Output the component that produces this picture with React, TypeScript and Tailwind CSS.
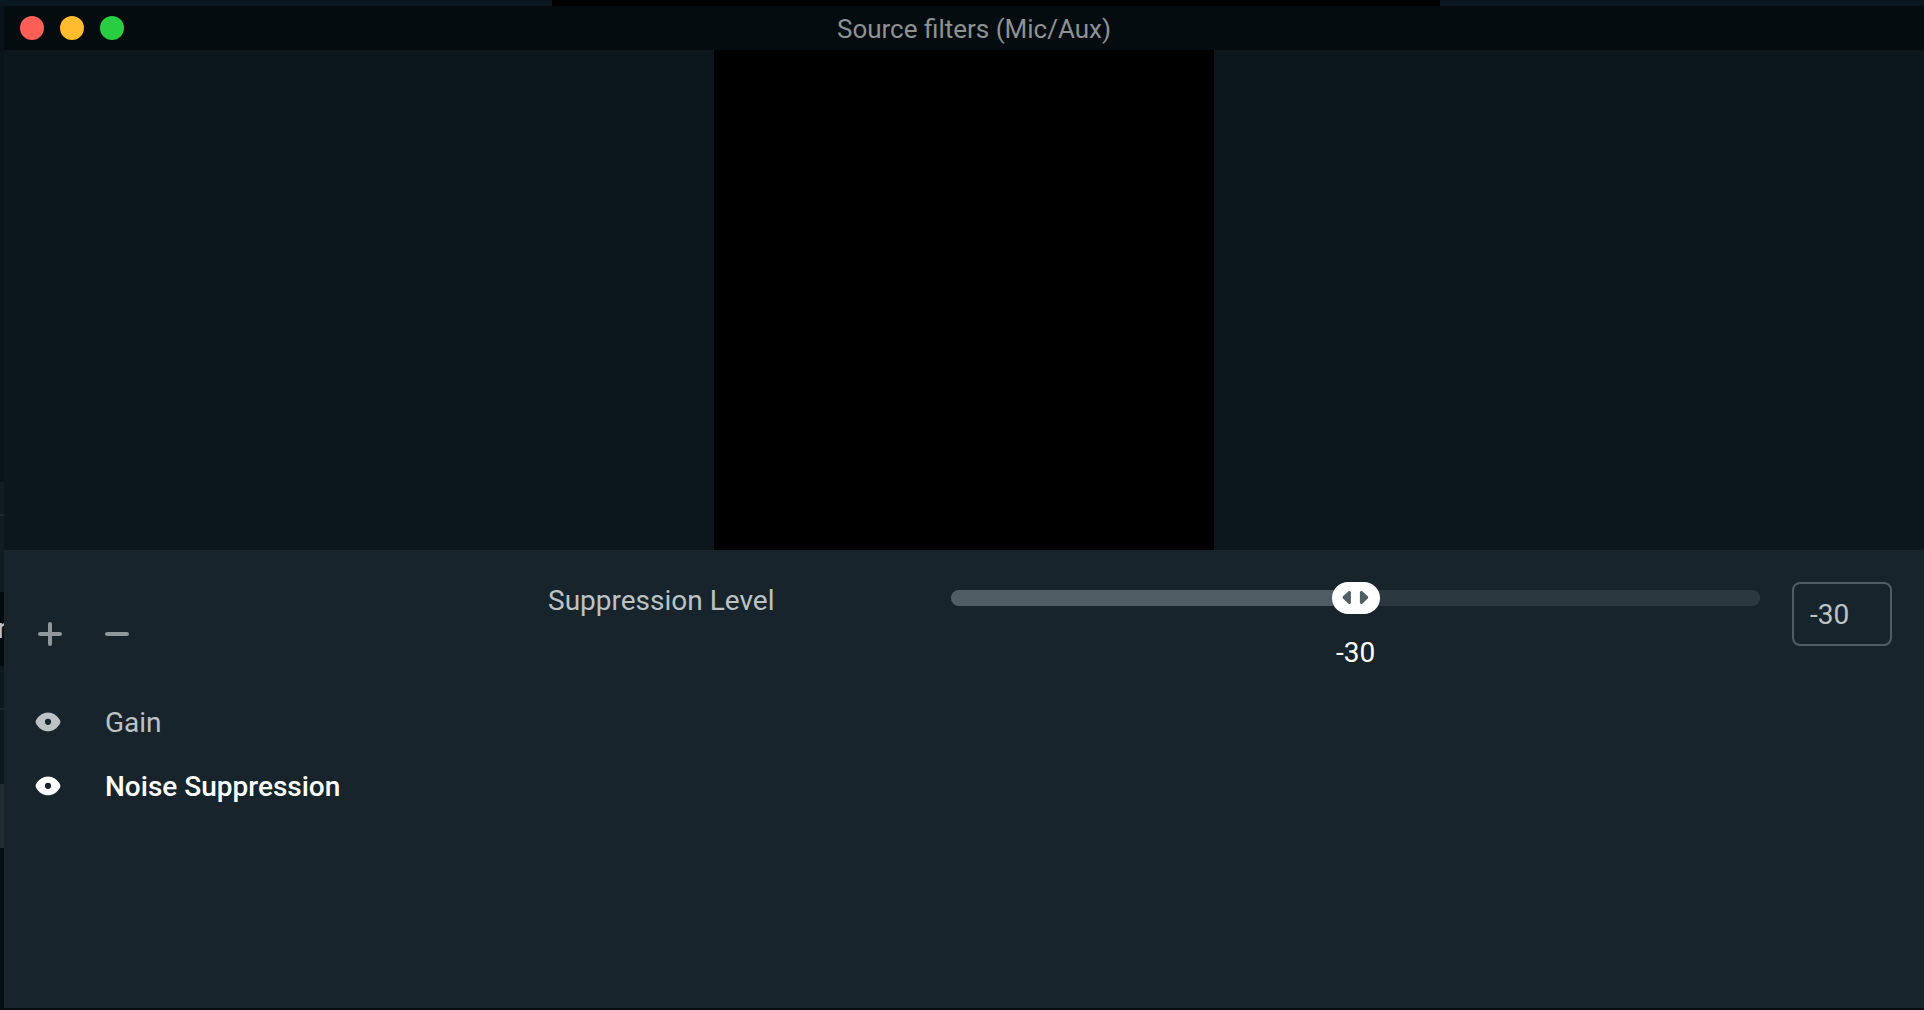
import React, { useState } from 'react';

const MIN_LEVEL = -60;
const MAX_LEVEL = 0;

const filters = [
  { id: 'gain', name: 'Gain' },
  { id: 'noise', name: 'Noise Suppression' },
];

const EyeIcon = () => (
  <svg width="26" height="20" viewBox="0 0 26 20" fill="currentColor" aria-hidden="true">
    <path
      fillRule="evenodd"
      d="M13 .4C8.200.4 3.600 3.200 1 8.200c-.5 1-.5 2.200 0 3.200 2.600 5 7.200 7.900 12 7.900s9.400-2.900 12-7.900c.5-1 .5-2.200 0-3.200C22.400 3.200 17.800.4 13 .4zm0 6.300a3.100 3.100 0 1 1 0 6.200 3.100 3.100 0 0 1 0-6.200z"
    />
  </svg>
);

const PlusIcon = () => (
  <svg width="24" height="24" viewBox="0 0 24 24" fill="none" stroke="currentColor" strokeWidth="4" strokeLinecap="round" aria-hidden="true">
    <path d="M12 2v20M2 12h20" />
  </svg>
);

const MinusIcon = () => (
  <svg width="24" height="24" viewBox="0 0 24 24" fill="none" stroke="currentColor" strokeWidth="4" strokeLinecap="round" aria-hidden="true">
    <path d="M2 12h20" />
  </svg>
);

const ThumbArrows = () => (
  <svg width="26" height="14" viewBox="0 0 26 14" fill="#4f5e65" aria-hidden="true">
    <path d="M.6 5.200 5.800.4C7-.3 8.500.2 8.500 1.600v9.800c0 1.400-1.500 1.900-2.700 1.200L.6 7.600a1.700 1.700 0 0 1 0-2.400z" />
    <path d="M25.400 5.200 20.200.4c-1.200-.7-2.700-.2-2.700 1.200v9.800c0 1.400 1.500 1.900 2.700 1.200l5.200-5a1.700 1.700 0 0 0 0-2.400z" />
  </svg>
);

// Sliver of the main window that shows to the left of the dialog
const Backdrop = () => (
  <div className="flex w-1 shrink-0 flex-col overflow-hidden bg-[#040d12]" aria-hidden="true">
    <div className="h-[476px] bg-[#08141a]" />
    <div className="h-8 bg-[#111c22]" />
    <div className="h-0.5 bg-[#1c272d]" />
    <div className="h-[76px] bg-[#111c22]" />
    <div className="flex h-[74px] items-center justify-center bg-[#040b0f] text-[28px] leading-none text-[#bdc2c4]">
      r
    </div>
    <div className="h-[42px] bg-[#0e191f]" />
    <div className="h-0.5 bg-[#1c272d]" />
    <div className="h-[74px] bg-[#0e191f]" />
    <div className="h-16 bg-[#222c30]" />
  </div>
);

const TitleBar = () => (
  <header className="flex h-11 items-center rounded-tl-xl bg-[#040c0f] pl-4">
    <div className="flex gap-4">
      <button aria-label="Close" className="size-6 rounded-full bg-[#ff5f57]" />
      <button aria-label="Minimize" className="size-6 rounded-full bg-[#febc2e]" />
      <button aria-label="Zoom" className="size-6 rounded-full bg-[#28cd41]" />
    </div>
    <h1 className="flex-1 pt-0.5 pr-[100px] text-center text-[26px] leading-8 text-[#8e9293]">
      Source filters (Mic/Aux)
    </h1>
  </header>
);

const App = () => {
  const [selected, setSelected] = useState('noise');
  const [level, setLevel] = useState(-30);

  const percent = ((level - MIN_LEVEL) / (MAX_LEVEL - MIN_LEVEL)) * 100;

  return (
    <div className="flex min-h-screen flex-col bg-[#040d12] font-[Roboto,sans-serif] text-[28px] leading-8 text-[#bdc2c4]">
      <div className="flex h-1.5 justify-center bg-[#0b171e] pl-[68px]">
        <div className="w-[888px] bg-black" />
      </div>

      <div className="flex flex-1">
        <Backdrop />

        <div className="flex flex-1 flex-col">
          <TitleBar />

          <div className="flex justify-center bg-[#0b171d]">
            <div className="size-[500px] bg-black" />
          </div>

          <main className="mb-0.5 flex flex-1 bg-[#17242b]">
            <aside className="w-[544px] shrink-0 px-8 pt-[72px]">
              <div className="flex gap-[43px] pl-0.5 text-[#91979a]">
                <button aria-label="Add filter" className="flex size-6 items-center justify-center">
                  <PlusIcon />
                </button>
                <button aria-label="Remove filter" className="flex size-6 items-center justify-center">
                  <MinusIcon />
                </button>
              </div>

              <ul className="-ml-px pt-11">
                {filters.map((filter) => (
                  <li
                    key={filter.id}
                    className={`flex h-16 items-center gap-11 ${selected === filter.id ? 'font-medium text-white' : ''}`}
                  >
                    <button aria-label={`Toggle ${filter.name}`}>
                      <EyeIcon />
                    </button>
                    <button className="pt-0.5" onClick={() => setSelected(filter.id)}>
                      {filter.name}
                    </button>
                  </li>
                ))}
              </ul>
            </aside>

            <form className="flex flex-1 items-start pt-8 pr-8">
              <label htmlFor="level" className="w-[30%] pt-[3px]">
                Suppression Level
              </label>
              <div className="flex flex-1 items-start gap-8">
                <div className="relative flex-1">
                  <input
                    id="level"
                    type="range"
                    min={MIN_LEVEL}
                    max={MAX_LEVEL}
                    value={level}
                    onChange={(e) => setLevel(Number(e.target.value))}
                    className="my-2 block h-4 w-full appearance-none rounded-full [&::-webkit-slider-thumb]:h-8 [&::-webkit-slider-thumb]:w-12 [&::-webkit-slider-thumb]:appearance-none [&::-webkit-slider-thumb]:rounded-full [&::-webkit-slider-thumb]:bg-white"
                    style={{ background: `linear-gradient(to right, #4f5e65 ${percent}%, #2b383f ${percent}%)` }}
                  />
                  {/* Inset by half the thumb so the value follows it */}
                  <div className="pointer-events-none absolute inset-x-6 top-0">
                    <div
                      className="absolute flex -translate-x-1/2 flex-col items-center gap-[23px] text-white"
                      style={{ left: `${percent}%` }}
                    >
                      <span className="flex h-8 items-center">
                        <ThumbArrows />
                      </span>
                      <output htmlFor="level">{level}</output>
                    </div>
                  </div>
                </div>
                <input
                  type="text"
                  aria-label="Suppression Level value"
                  value={level}
                  onChange={(e) => setLevel(Number(e.target.value) || 0)}
                  className="h-16 w-[100px] rounded-lg border-2 border-[#4f5e65] bg-transparent px-4"
                />
              </div>
            </form>
          </main>
        </div>
      </div>
    </div>
  );
};

export default App;
